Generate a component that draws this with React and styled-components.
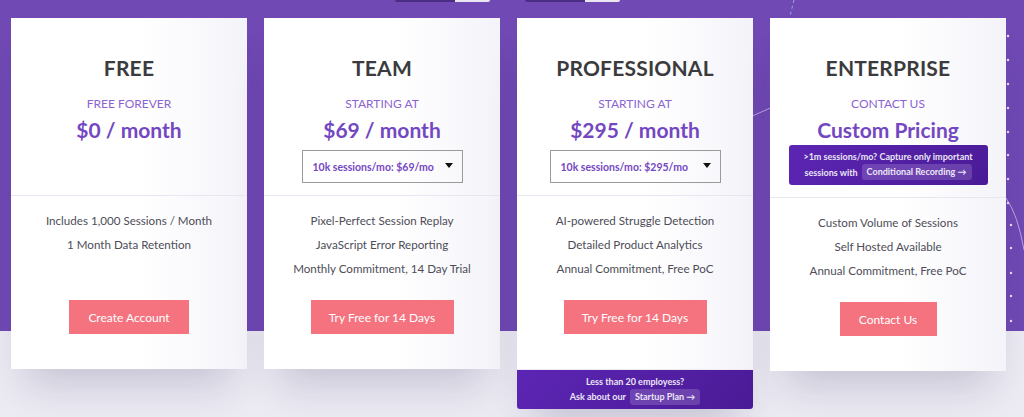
import React from "react";
import styled, { createGlobalStyle } from "styled-components";

const c_purple_bg = "#7049b4";
const c_grey_bg = "#ecebf3";
const c_title = "#3b3b3d";
const c_sub = "#8b63d1";
const c_price = "#7447c2";
const c_text = "#4d4d58";
const c_button = "#f4737f";
const font = `"Lato", "Open Sans", sans-serif`;

const GlobalStyle = createGlobalStyle`
  body {
    margin: 0;
    font-family: ${font};
    -webkit-font-smoothing: antialiased;
  }
`;

const Page = styled.div`
  background: linear-gradient(
    to bottom,
    ${c_purple_bg} 0,
    ${c_purple_bg} 331px,
    ${c_grey_bg} 331px
  );
  height: 417px;
  overflow: hidden;
  position: relative;
  width: 1024px;
`;

const Decor = styled.svg`
  height: 417px;
  left: 0;
  pointer-events: none;
  position: absolute;
  top: 0;
  width: 1024px;
`;

const Toggles = styled.div`
  display: flex;
  gap: 35px;
  height: 18px;
  justify-content: center;
  margin-left: -9px;
`;

const Toggle = styled.div`
  background: linear-gradient(to right, #4b2d86 0, #4b2d86 63%, #e9e6f2 63%);
  border-radius: 0 0 3px 3px;
  height: 2px;
  width: 95px;
`;

const Row = styled.div`
  align-items: flex-start;
  display: flex;
  gap: 17px;
  padding-left: 11px;
  position: relative;
`;

const Card = styled.div`
  box-shadow: 0 28px 40px -14px rgba(40, 30, 80, 0.2);
  border-radius: 0 0 4px 4px;
  display: flex;
  flex-direction: column;
  width: 236px;
`;

const Body = styled.div`
  background: linear-gradient(90deg, #ffffff 55%, #f4f3f9 100%);
  display: flex;
  flex-direction: column;
  text-align: center;
`;

const Head = styled.div`
  align-items: center;
  border-bottom: 1px solid #e8e6f0;
  box-sizing: border-box;
  display: flex;
  flex-direction: column;
  min-height: 178px;
  padding: 38px 0 12px;
`;

const Title = styled.div`
  color: ${c_title};
  font-size: 21px;
  font-weight: 700;
  letter-spacing: 0.2px;
  line-height: 24px;
`;

const Sub = styled.div`
  color: ${c_sub};
  font-size: 12px;
  line-height: 14px;
  margin-top: 17px;
`;

const Price = styled.div`
  color: ${c_price};
  font-size: 21px;
  font-weight: 700;
  line-height: 24px;
  margin-top: 7px;
`;

const Select = styled.div`
  align-items: center;
  border: 1px solid #9a9a9a;
  box-sizing: border-box;
  color: ${c_price};
  display: flex;
  font-size: 10.5px;
  font-weight: 700;
  height: 33px;
  justify-content: space-between;
  margin-top: 8px;
  padding: 0 9px 0 10px;
  width: ${props => props.width}px;
`;

const Caret = styled.span`
  border-left: 4px solid transparent;
  border-right: 4px solid transparent;
  border-top: 5px solid #111;
  height: 0;
  margin-top: -2px;
  width: 0;
`;

const Promo = styled.div`
  background: linear-gradient(135deg, #5c25b4 0%, #4a1b96 100%);
  border-radius: ${props => (props.footer ? "0 0 3px 3px" : "3px")};
  box-sizing: border-box;
  color: #ece6f7;
  display: flex;
  flex-direction: column;
  font-size: 9px;
  font-weight: 700;
  height: ${props => (props.footer ? "39px" : "40px")};
  justify-content: center;
  line-height: 13px;
  margin-top: ${props => (props.footer ? "1px" : "3px")};
  text-align: center;
  width: ${props => props.width};
`;

const PromoLine = styled.div`
  align-items: center;
  display: flex;
  gap: 4px;
  height: 16px;
  justify-content: center;
  margin-top: 1px;
`;

const Pill = styled.span`
  background: rgba(255, 255, 255, 0.16);
  border-radius: 3px;
  line-height: 16px;
  padding: 0 5px;
`;

const Features = styled.div`
  display: flex;
  flex-direction: column;
  min-height: 72px;
  padding-top: 13px;
`;

const Feature = styled.div`
  color: ${c_text};
  font-size: 11.6px;
  line-height: 24px;
`;

const ButtonRow = styled.div`
  display: flex;
  justify-content: center;
  padding: 19px 0 35px;
`;

const Button = styled.div`
  align-items: center;
  background: ${c_button};
  color: #fff;
  display: flex;
  font-size: 12px;
  height: 34px;
  justify-content: center;
  width: ${props => props.width}px;
`;

const plans = [
  {
    title: "FREE",
    sub: "FREE FOREVER",
    price: "$0 / month",
    features: ["Includes 1,000 Sessions / Month", "1 Month Data Retention"],
    cta: "Create Account",
    ctaWidth: 120
  },
  {
    title: "TEAM",
    sub: "STARTING AT",
    price: "$69 / month",
    select: "10k sessions/mo: $69/mo",
    selectWidth: 161,
    features: [
      "Pixel-Perfect Session Replay",
      "JavaScript Error Reporting",
      "Monthly Commitment, 14 Day Trial"
    ],
    cta: "Try Free for 14 Days",
    ctaWidth: 143
  },
  {
    title: "PROFESSIONAL",
    sub: "STARTING AT",
    price: "$295 / month",
    select: "10k sessions/mo: $295/mo",
    selectWidth: 171,
    features: [
      "AI-powered Struggle Detection",
      "Detailed Product Analytics",
      "Annual Commitment, Free PoC"
    ],
    cta: "Try Free for 14 Days",
    ctaWidth: 143,
    footer: true
  },
  {
    title: "ENTERPRISE",
    sub: "CONTACT US",
    price: "Custom Pricing",
    banner: true,
    features: [
      "Custom Volume of Sessions",
      "Self Hosted Available",
      "Annual Commitment, Free PoC"
    ],
    cta: "Contact Us",
    ctaWidth: 97
  }
];

const Arrow = () => <span>&rarr;</span>;

const Decoration = () => {
  const dots = [];
  [36, 60, 84, 108, 132, 155, 179, 203].forEach(y =>
    dots.push(<circle key={`a${y}`} cx="1008" cy={y} r="1.2" fill="#e9e2f7" />)
  );
  [225, 248, 273, 296, 321].forEach(y =>
    dots.push(<circle key={`b${y}`} cx="1011" cy={y} r="1.2" fill="#e9e2f7" />)
  );
  return (
    <Decor viewBox="0 0 1024 417">
      <line x1="700" y1="139" x2="800" y2="95" stroke="#b9a6e0" strokeWidth="1" />
      <line x1="794" y1="0" x2="790" y2="16" stroke="#9fc0e6" strokeWidth="0.8" strokeDasharray="3 3" />
      <path d="M1006 198 Q1018 215 1024 250" fill="none" stroke="#b9a6e0" strokeWidth="1" />
      {dots}
    </Decor>
  );
};

export default () => (
  <Page>
    <GlobalStyle />
    <Decoration />
    <Toggles>
      <Toggle />
      <Toggle />
    </Toggles>
    <Row>
      {plans.map(plan => (
        <Card key={plan.title}>
          <Body>
            <Head>
              <Title>{plan.title}</Title>
              <Sub>{plan.sub}</Sub>
              <Price>{plan.price}</Price>
              {plan.select && (
                <Select width={plan.selectWidth}>
                  {plan.select}
                  <Caret />
                </Select>
              )}
              {plan.banner && (
                <Promo width="199px">
                  <div>&gt;1m sessions/mo? Capture only important</div>
                  <PromoLine>
                    sessions with
                    <Pill>
                      Conditional Recording <Arrow />
                    </Pill>
                  </PromoLine>
                </Promo>
              )}
            </Head>
            <Features>
              {plan.features.map(f => (
                <Feature key={f}>{f}</Feature>
              ))}
            </Features>
            <ButtonRow>
              <Button width={plan.ctaWidth}>{plan.cta}</Button>
            </ButtonRow>
          </Body>
          {plan.footer && (
            <Promo footer width="100%">
              <div>Less than 20 employess?</div>
              <PromoLine>
                Ask about our
                <Pill>
                  Startup Plan <Arrow />
                </Pill>
              </PromoLine>
            </Promo>
          )}
        </Card>
      ))}
    </Row>
  </Page>
);
